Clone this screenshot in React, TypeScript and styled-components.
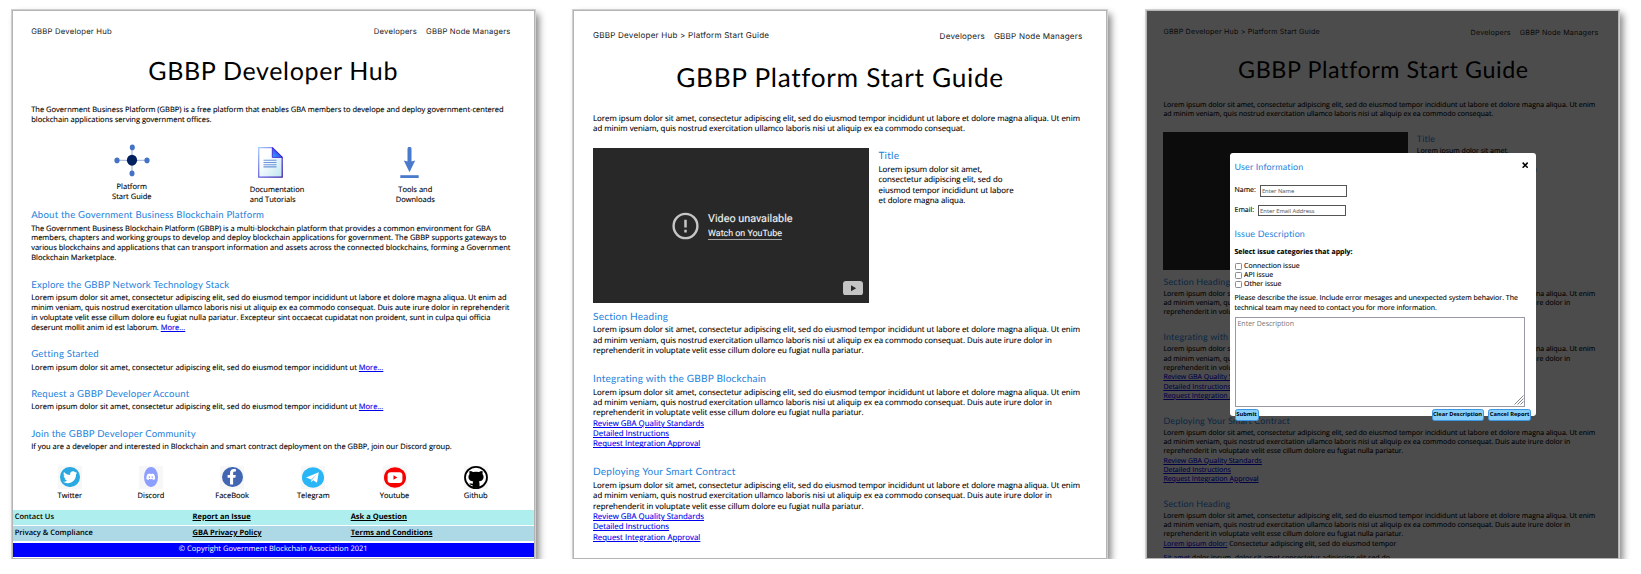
import React from 'react';
import styled, { createGlobalStyle, css } from 'styled-components';
import { FaTwitter, FaFacebookF, FaDiscord } from 'react-icons/fa';

const GlobalStyle = createGlobalStyle`
  * { box-sizing: border-box; }
  body {
    margin: 0;
    background: #fff;
    color: #000;
    font-family: "Open Sans", "Liberation Sans", sans-serif;
    text-rendering: geometricPrecision;
    overflow: hidden;
  }
`;

const display = css`font-family: Lato, "Open Sans", sans-serif;`;

const Board = styled.main`
  display: flex;
  gap: 38.5px;
  padding: 10px 0 0 12px;
`;

const Card = styled.article<{ $width: number; $size: number; $leading: number; $top: number }>`
  position: relative;
  flex: none;
  display: flex;
  flex-direction: column;
  width: ${p => p.$width}px;
  height: 548.5px;
  padding: ${p => p.$top}px 0 0;
  border: 1px solid #b4b4b4;
  outline: 0.5px solid #d0d0d0;
  background: #fff;
  box-shadow: 4px 4px 7px rgba(0, 0, 0, 0.48);
  font-size: ${p => p.$size}px;
  line-height: ${p => p.$leading}px;
  overflow: hidden;
`;

const Content = styled.div<{ $inset: number }>`
  display: flex;
  flex-direction: column;
  padding-left: ${p => p.$inset}px;
`;

const Nav = styled.nav<{ $width: number }>`
  display: flex;
  justify-content: space-between;
  width: ${p => p.$width}px;
  height: 12px;
  font-family: Inter, "Open Sans", sans-serif;
  font-size: 1.025em;
  line-height: 12px;
  letter-spacing: 0.026em;
  color: #1a1a1a;
  white-space: nowrap;
`;

const NavLinks = styled.div<{ $drop?: number }>`
  display: flex;
  gap: 9px;
  padding-top: ${p => p.$drop ?? 0}px;
`;

const Title = styled.h1<{ $mt: number; $height: number; $width: number }>`
  ${display}
  width: ${p => p.$width}px;
  margin: ${p => p.$mt}px 0 0;
  font-size: 3.33em;
  font-weight: 400;
  line-height: ${p => p.$height}px;
  letter-spacing: 0.026em;
  text-align: center;
  color: #000;
  white-space: nowrap;
`;

const Heading = styled.h2<{ $mt?: number; $gap?: number }>`
  ${display}
  margin: ${p => p.$mt ?? 0}px 0 ${p => p.$gap ?? 2.2}px;
  font-size: 1.275em;
  font-weight: 400;
  line-height: 12px;
  letter-spacing: 0.022em;
  color: #1c7fdc;
  white-space: nowrap;
`;

const Paragraph = styled.p<{ $mt?: number; $bold?: boolean }>`
  flex: none;
  margin: ${p => p.$mt ?? 0}px 0 0;
  font-weight: ${p => (p.$bold ? 700 : 400)};
  -webkit-text-stroke: 0.12px currentColor;
  white-space: nowrap;
`;

const Line = styled.span`
  display: block;
`;

const Link = styled.a`
  color: #0000ee;
  text-decoration: underline;
`;

const Lines = ({ text, mt }: { text: React.ReactNode[]; mt?: number }) => (
  <Paragraph $mt={mt}>
    {text.map((t, i) => <Line key={i}>{t}</Line>)}
  </Paragraph>
);

/* ---------- Developer hub ---------- */

const Shortcuts = styled.div`
  display: flex;
  align-items: flex-start;
  height: 84.8px;
`;

const Shortcut = styled.div<{ $before: number; $width: number; $top: number; $align: string }>`
  flex: none;
  display: flex;
  flex-direction: column;
  align-items: ${p => p.$align};
  width: ${p => p.$width}px;
  margin-left: ${p => p.$before}px;
  padding-top: ${p => p.$top}px;
  text-align: ${p => (p.$align === 'center' ? 'center' : 'left')};
  -webkit-text-stroke: 0.12px currentColor;
  white-space: nowrap;
`;

const ShortcutIcon = styled.svg<{ $shift?: string }>`
  flex: none;
  display: block;
  margin: ${p => p.$shift ?? '0'};
`;

const Socials = styled.div`
  display: grid;
  grid-template-columns: repeat(6, 81.2px);
  margin: 12.2px 0 0 -2px;
`;

const Social = styled.div`
  display: flex;
  flex-direction: column;
  align-items: center;
  gap: 3.6px;
  -webkit-text-stroke: 0.12px currentColor;
`;

const Badge = styled.div`
  display: flex;
  align-items: center;
  justify-content: center;
  width: 24px;
  height: 23px;
  background: #f7f7f7;
`;

const Disc = styled.div<{ $w: number; $h: number; $color: string }>`
  display: flex;
  align-items: center;
  justify-content: center;
  width: ${p => p.$w}px;
  height: ${p => p.$h}px;
  border-radius: 50%;
  background: ${p => p.$color};
  color: #fff;
`;

const Footer = styled.footer`
  display: flex;
  flex-direction: column;
  gap: 1.3px;
  margin-top: 8.1px;
`;

const FooterRow = styled.div<{ $color: string }>`
  display: grid;
  grid-template-columns: 177.8px 158.2px 1fr;
  align-items: center;
  height: 14.9px;
  padding-left: 1.7px;
  background: ${p => p.$color};
  font-weight: 600;
`;

const FooterLink = styled.a`
  font-weight: 700;
  text-decoration: underline;
`;

const Copyright = styled.div`
  display: flex;
  align-items: center;
  justify-content: center;
  height: 14.2px;
  background: #0000ff;
  color: #fff;
`;

const socials: [string, React.ReactNode][] = [
  ['Twitter', <Disc $w={19.6} $h={20.6} $color="#2aa9e0"><FaTwitter size={14.5} /></Disc>],
  ['Discord', <Disc $w={13.6} $h={20.6} $color="#8c9eff"><FaDiscord size={9.5} /></Disc>],
  ['FaceBook', (
    <Disc $w={21} $h={20.4} $color="#4267b2"><FaFacebookF size={15.5} /></Disc>
  )],
  ['Telegram', (
    <svg width="22" height="21" viewBox="0 0 22 21">
      <ellipse cx="11" cy="10.5" rx="11" ry="10.3" fill="#29b6f6" />
      <path d="M4 10.6 L16.8 5.2 L15 15.8 L11.2 13.2 L9.3 15.2 L8.8 12.3 Z" fill="#fff" />
      <path d="M8.8 12.3 L15.2 6.9 L10.4 12.7 L9.3 15.2 Z" fill="#b0d4ea" />
    </svg>
  )],
  ['Youtube', (
    <svg width="22" height="21" viewBox="0 0 22 21">
      <ellipse cx="11" cy="10.5" rx="11" ry="10.3" fill="#f60000" />
      <rect x="3.6" y="5.2" width="14.8" height="10.8" rx="3" fill="#fff" />
      <path d="M9.5 8.3 L13.3 10.5 L9.5 12.7 Z" fill="#f60000" />
    </svg>
  )],
  ['Github', (
    <svg width="24" height="23" viewBox="0 0 24 23">
      <ellipse cx="12" cy="11.5" rx="11" ry="10.6" fill="#fff" stroke="#000" strokeWidth="1.8" />
      <path d="M5.6 5 Q7.4 4.9 9 6.1 Q12 5.4 15 6.1 Q16.6 4.9 18.4 5 Q18.9 6.7 18.5 7.9 Q20 9.6 19.5 12 Q18.8 15 14.8 15.5 Q15.6 16.4 15.5 18 L15.5 21 Q12 22 8.6 21 L8.6 19.3 Q6.2 19.5 5.3 17.2 Q7 17.5 8.8 17.8 Q8.7 16.4 9.2 15.5 Q5.2 15 4.5 12 Q4 9.6 5.5 7.9 Q5.1 6.7 5.6 5 Z" fill="#000" />
    </svg>
  )],
];

const Hub = () => (
  <Card $width={522.5} $size={7.52} $leading={9.91} $top={15.2}>
    <Content $inset={18.2}>
      <Nav $width={479.3}>
        <span>GBBP Developer Hub</span>
        <NavLinks><span>Developers</span><span>GBBP Node Managers</span></NavLinks>
      </Nav>
      <Title $mt={18.3} $height={30} $width={484}>GBBP Developer Hub</Title>
      <Lines mt={19.3} text={[
        'The Government Business Platform (GBBP) is a free platform that enables GBA members to develope and deploy government-centered',
        'blockchain applications serving government offices.',
      ]} />
      <Shortcuts>
        <Shortcut $before={79.6} $width={42} $top={18.8} $align="center">
          <ShortcutIcon width="36" height="33" viewBox="0 0 36 33" $shift="0 0 5.8px 0">
            <path d="M3 16.3 H33 M18 3 V30" stroke="#8ea6d8" strokeWidth="0.9" />
            <ellipse cx="18" cy="16.2" rx="5.1" ry="5.5" fill="#002060" />
            <g fill="#4472c4">
              <ellipse cx="18.3" cy="3.4" rx="2.5" ry="2.8" />
              <ellipse cx="18" cy="29.4" rx="2.5" ry="2.8" />
              <ellipse cx="3" cy="16.4" rx="2.6" ry="2.8" />
              <ellipse cx="33" cy="16.4" rx="2.6" ry="2.8" />
            </g>
          </ShortcutIcon>
          <span>Platform</span>
          <span>Start Guide</span>
        </Shortcut>
        <Shortcut $before={97} $width={54} $top={21.8} $align="flex-start">
          <ShortcutIcon width="25" height="31" viewBox="0 0 25 31" $shift="0 0 7.4px 8.4px">
            <defs>
              <linearGradient id="sheet" x1="0" y1="0" x2="1" y2="1">
                <stop offset="0.3" stopColor="#fff" />
                <stop offset="1" stopColor="#bfe6f0" />
              </linearGradient>
              <linearGradient id="edge" x1="0" y1="0" x2="1" y2="1">
                <stop offset="0" stopColor="#a9cbfb" />
                <stop offset="0.6" stopColor="#5b50d8" />
                <stop offset="1" stopColor="#3c1fa8" />
              </linearGradient>
              <linearGradient id="fold" x1="0" y1="1" x2="1" y2="0">
                <stop offset="0" stopColor="#2fb0ff" />
                <stop offset="1" stopColor="#3b00e0" />
              </linearGradient>
            </defs>
            <path d="M0.7 0.7 H14.5 L24.2 10.2 V30.2 H0.7 Z" fill="url(#sheet)" stroke="url(#edge)" strokeWidth="1.3" />
            <path d="M14.3 0.6 L24.4 10.4 H14.3 Z" fill="url(#fold)" stroke="#3b10d8" strokeWidth="0.8" />
            <path d="M5.5 13.3 H18.5 M5.5 15.5 H18.5 M5.5 17.7 H18.5 M5.5 19.9 H18.5" stroke="#6d95dc" strokeWidth="1.1" />
          </ShortcutIcon>
          <span>Documentation</span>
          <span>and Tutorials</span>
        </Shortcut>
        <Shortcut $before={91} $width={41} $top={21.8} $align="center">
          <ShortcutIcon width="19" height="32" viewBox="0 0 19 32" $shift="0 11px 6.4px 0">
            <path d="M9.5 1.8 V16" stroke="#4a7acb" strokeWidth="4" strokeLinecap="round" />
            <path d="M3.8 13.6 Q9.5 15.6 15.2 13.6 L9.5 25.2 Z" fill="#4a7acb" />
            <rect x="0.3" y="28.2" width="18.4" height="2.8" fill="#4a7acb" />
          </ShortcutIcon>
          <span>Tools and</span>
          <span>Downloads</span>
        </Shortcut>
      </Shortcuts>
      <Heading>About the Government Business Blockchain Platform</Heading>
      <Lines text={[
        'The Government Business Blockchain Platform (GBBP) is a multi-blockchain platform that provides a common environment for GBA',
        'members, chapters and working groups to develop and deploy blockchain applications for government. The GBBP supports gateways to',
        'various blockchains and applications that can transport information and assets across the connected blockchains, forming a Government',
        'Blockchain Marketplace.',
      ]} />
      <Heading $mt={16}>Explore the GBBP Network Technology Stack</Heading>
      <Lines text={[
        'Lorem ipsum dolor sit amet, consectetur adipiscing elit, sed do eiusmod tempor incididunt ut labore et dolore magna aliqua. Ut enim ad',
        'minim veniam, quis nostrud exercitation ullamco laboris nisi ut aliquip ex ea commodo consequat. Duis aute irure dolor in reprehenderit',
        'in voluptate velit esse cillum dolore eu fugiat nulla pariatur. Excepteur sint occaecat cupidatat non proident, sunt in culpa qui officia',
        <>deserunt mollit anim id est laborum. <Link>More...</Link></>,
      ]} />
      <Heading $mt={15.2} $gap={2.4}>Getting Started</Heading>
      <Lines text={[<>Lorem ipsum dolor sit amet, consectetur adipiscing elit, sed do eiusmod tempor incididunt ut <Link>More...</Link></>]} />
      <Heading $mt={15.8}>Request a GBBP Developer Account</Heading>
      <Lines text={[<>Lorem ipsum dolor sit amet, consectetur adipiscing elit, sed do eiusmod tempor incididunt ut <Link>More...</Link></>]} />
      <Heading $mt={15.9}>Join the GBBP Developer Community</Heading>
      <Lines text={['If you are a developer and interested in Blockchain and smart contract deployment on the GBBP, join our Discord group.']} />
      <Socials>
        {socials.map(([name, icon]) => (
          <Social key={name}>
            <Badge>{icon}</Badge>
            <span>{name}</span>
          </Social>
        ))}
      </Socials>
    </Content>
    <Footer>
      <FooterRow $color="#afeeee">
        <span>Contact Us</span>
        <FooterLink>Report an Issue</FooterLink>
        <FooterLink>Ask a Question</FooterLink>
      </FooterRow>
      <FooterRow $color="#add8e6">
        <span>Privacy &amp; Compliance</span>
        <FooterLink>GBA Privacy Policy</FooterLink>
        <FooterLink>Terms and Conditions</FooterLink>
      </FooterRow>
      <Copyright>© Copyright Government Blockchain Association 2021</Copyright>
    </Footer>
  </Card>
);

/* ---------- Start guide ---------- */

const MediaRow = styled.div<{ $mt: number; $gap: number }>`
  display: flex;
  gap: ${p => p.$gap}px;
  margin-top: ${p => p.$mt}px;
`;

const Video = styled.div<{ $w: number; $h: number }>`
  flex: none;
  display: flex;
  flex-direction: column;
  width: ${p => p.$w}px;
  height: ${p => p.$h}px;
  background: #282828;
`;

const VideoMessage = styled.div`
  display: flex;
  align-items: flex-start;
  gap: 9.6px;
  padding: 63.5px 0 0 78.5px;
  font-family: Roboto, sans-serif;
  color: #f0f0f0;
  -webkit-text-stroke: 0.12px currentColor;
  white-space: nowrap;
`;

const VideoText = styled.div`
  display: flex;
  flex-direction: column;
  font-size: 10.8px;
  line-height: 13px;
`;

const VideoLink = styled.a`
  align-self: flex-start;
  margin-top: 4.2px;
  border-bottom: 1px solid #a8a8a8;
  font-size: 8.9px;
  line-height: 10px;
`;

const YoutubeMark = styled.svg`
  align-self: flex-end;
  display: block;
  margin: auto 5.3px 8.3px 0;
`;

const Side = styled.div<{ $pt: number }>`
  padding-top: ${p => p.$pt}px;
`;

const intro = [
  'Lorem ipsum dolor sit amet, consectetur adipiscing elit, sed do eiusmod tempor incididunt ut labore et dolore magna aliqua. Ut enim',
  'ad minim veniam, quis nostrud exercitation ullamco laboris nisi ut aliquip ex ea commodo consequat.',
];
const sectionText = [
  intro[0],
  intro[1] + ' Duis aute irure dolor in',
  'reprehenderit in voluptate velit esse cillum dolore eu fugiat nulla pariatur.',
];
const sectionLinks = [
  <Link>Review GBA Quality Standards</Link>,
  <Link>Detailed Instructions</Link>,
  <Link>Request Integration Approval</Link>,
];
const sideText = [
  'Lorem ipsum dolor sit amet,',
  'consectetur adipiscing elit, sed do',
  'eiusmod tempor incididunt ut labore',
  'et dolore magna aliqua.',
];

const Guide = () => (
  <Card $width={534} $size={7.88} $leading={10.35} $top={18.4}>
    <Content $inset={19}>
      <Nav $width={489.5}>
        <span>GBBP Developer Hub &gt; Platform Start Guide</span>
        <NavLinks $drop={0.7}><span>Developers</span><span>GBBP Node Managers</span></NavLinks>
      </Nav>
      <Title $mt={21} $height={30} $width={494}>GBBP Platform Start Guide</Title>
      <Lines mt={21.3} text={intro} />
      <MediaRow $mt={13.9} $gap={10}>
        <Video $w={275.5} $h={155}>
          <VideoMessage>
            <svg width="27" height="28" viewBox="0 0 27 28">
              <ellipse cx="13.5" cy="14" rx="11.9" ry="12.1" fill="none" stroke="#c6c6c6" strokeWidth="2.4" />
              <path d="M13.5 7.8 V15.4 M13.5 17.8 V20.4" stroke="#c6c6c6" strokeWidth="2.5" />
            </svg>
            <VideoText>
              <span>Video unavailable</span>
              <VideoLink>Watch on YouTube</VideoLink>
            </VideoText>
          </VideoMessage>
          <YoutubeMark width="20" height="14.4" viewBox="0 0 20 14.4">
            <rect width="20" height="14.4" rx="3" fill="#c4c4c4" />
            <path d="M8 4.2 L13.2 7.2 L8 10.2 Z" fill="#282828" />
          </YoutubeMark>
        </Video>
        <Side $pt={1.5}>
          <Heading $gap={3.3}>Title</Heading>
          <Lines text={sideText} />
        </Side>
      </MediaRow>
      <Heading $mt={7.5} $gap={2.7}>Section Heading</Heading>
      <Lines text={sectionText} />
      <Heading $mt={16.4} $gap={2.9}>Integrating with the GBBP Blockchain</Heading>
      <Lines text={[...sectionText, ...sectionLinks]} />
      <Heading $mt={16.3} $gap={2.8}>Deploying Your Smart Contract</Heading>
      <Lines text={[...sectionText, ...sectionLinks]} />
    </Content>
  </Card>
);

/* ---------- Issue report dialog over the guide ---------- */

const Overlay = styled.div`
  position: absolute;
  inset: 0;
  background: rgba(0, 0, 0, 0.7);
`;

const Dialog = styled.form`
  position: absolute;
  left: 83px;
  top: 142.3px;
  display: flex;
  flex-direction: column;
  width: 306.5px;
  height: 263px;
  padding: 7.8px 0 0 5px;
  border-radius: 3px;
  background: #fff;
  & > * { flex: none; }
`;

const DialogTop = styled.div`
  display: flex;
  justify-content: space-between;
  padding-right: 8px;
`;

const CloseIcon = styled.svg`
  display: block;
  margin-top: 0.8px;
`;

const Field = styled.label<{ $mt: number; $gap: number }>`
  display: flex;
  align-items: center;
  gap: ${p => p.$gap}px;
  height: 11.3px;
  margin-top: ${p => p.$mt}px;
  -webkit-text-stroke: 0.12px currentColor;
`;

const Input = styled.input`
  width: 87.6px;
  height: 11.3px;
  padding: 0 1px;
  border: 1px solid #555;
  border-radius: 0;
  background: #fff;
  font: 5.84px/8px "Open Sans", sans-serif;
  &::placeholder { color: #757575; }
`;

const Checks = styled.div`
  display: flex;
  flex-direction: column;
  margin-top: 4.5px;
  -webkit-text-stroke: 0.12px currentColor;
`;

const CheckRow = styled.label`
  display: flex;
  align-items: center;
  gap: 2.6px;
  height: 9.28px;
`;

const Check = styled.input`
  appearance: none;
  width: 7px;
  height: 7px;
  margin: 0 0 1px;
  border: 1px solid #8a8a92;
  border-radius: 1.3px;
  background: #fff;
`;

const TextBox = styled.div`
  position: relative;
  width: 290.6px;
  height: 90.3px;
  margin-top: 3.8px;
`;

const Area = styled.textarea`
  display: block;
  width: 100%;
  height: 100%;
  padding: 1.5px 2px;
  border: 1px solid #9999a6;
  resize: none;
  background: #fff;
  font: 6.97px/9.3px "Open Sans", sans-serif;
  &::placeholder { color: #757575; }
`;

const Grip = styled.svg`
  position: absolute;
  right: 1.5px;
  bottom: 1.5px;
`;

const Buttons = styled.div`
  display: flex;
  gap: 4.8px;
  width: 296.6px;
  margin-top: 2px;
`;

const Button = styled.button<{ $width: number; $push?: boolean }>`
  flex: none;
  width: ${p => p.$width}px;
  height: 11.6px;
  margin: 0 ${p => (p.$push ? 'auto' : '0')} 0 0;
  padding: 0;
  border: 1px solid #3d97e0;
  border-radius: 2.5px;
  background: #87cefa;
  color: #000;
  font: 700 5.72px/9px "Open Sans", sans-serif;
  white-space: nowrap;
`;

const Report = () => (
  <Card $width={473.8} $size={6.99} $leading={9.28} $top={14.9}>
    <Content $inset={16.9}>
      <Nav $width={435}>
        <span>GBBP Developer Hub &gt; Platform Start Guide</span>
        <NavLinks $drop={0.7}><span>Developers</span><span>GBBP Node Managers</span></NavLinks>
      </Nav>
      <Title $mt={18.2} $height={26} $width={440}>GBBP Platform Start Guide</Title>
      <Lines mt={18.9} text={intro} />
      <MediaRow $mt={12.5} $gap={9}>
        <Video $w={244.4} $h={138} />
        <Side $pt={0.8}>
          <Heading>Title</Heading>
          <Lines text={sideText} />
        </Side>
      </MediaRow>
      <Heading $mt={5.7}>Section Heading</Heading>
      <Lines text={sectionText} />
      <Heading $mt={13.5}>Integrating with the GBBP Blockchain</Heading>
      <Lines text={[...sectionText, ...sectionLinks]} />
      <Heading $mt={13.4}>Deploying Your Smart Contract</Heading>
      <Lines text={[...sectionText, ...sectionLinks]} />
      <Heading $mt={13.3} $gap={2}>Section Heading</Heading>
      <Lines text={sectionText} />
      <Lines mt={0.8} text={[<><Link>Lorem ipsum dolor:</Link> Consectetur adipiscing elit, sed do eiusmod tempor</>]} />
      <Lines mt={4.4} text={[<><Link>Sit amet</Link> dolor ipsum, dolor sit amet consectetur adipiscing elit sed do</>]} />
    </Content>
    <Overlay />
    <Dialog>
      <DialogTop>
        <Heading $gap={0}>User Information</Heading>
        <CloseIcon width="6.4" height="6.4" viewBox="0 0 6 6">
          <path d="M0.6 0.6 L5.4 5.4 M5.4 0.6 L0.6 5.4" stroke="#000" strokeWidth="1.4" />
        </CloseIcon>
      </DialogTop>
      <Field $mt={12.3} $gap={4}>Name: <Input placeholder="Enter Name" /></Field>
      <Field $mt={8.4} $gap={4}>Email: <Input placeholder="Enter Email Address" /></Field>
      <Heading $mt={12} $gap={7.8}>Issue Description</Heading>
      <Paragraph $bold>Select issue categories that apply:</Paragraph>
      <Checks>
        {['Connection issue', 'API issue', 'Other issue'].map(t => (
          <CheckRow key={t}><Check type="checkbox" />{t}</CheckRow>
        ))}
      </Checks>
      <Lines mt={4.5} text={[
        'Please describe the issue. Include error mesages and unexpected system behavior. The',
        'technical team may need to contact you for more information.',
      ]} />
      <TextBox>
        <Area placeholder="Enter Description" />
        <Grip width="10" height="10" viewBox="0 0 10 10">
          <path d="M0.5 9.5 L9.5 0.5 M3.5 9.5 L9.5 3.5 M6.5 9.5 L9.5 6.5" stroke="#777" strokeWidth="0.9" />
        </Grip>
      </TextBox>
      <Buttons>
        <Button type="button" $width={24} $push>Submit</Button>
        <Button type="button" $width={52}>Clear Description</Button>
        <Button type="button" $width={42.8}>Cancel Report</Button>
      </Buttons>
    </Dialog>
  </Card>
);

export default function App() {
  return (
    <>
      <GlobalStyle />
      <Board>
        <Hub />
        <Guide />
        <Report />
      </Board>
    </>
  );
}
